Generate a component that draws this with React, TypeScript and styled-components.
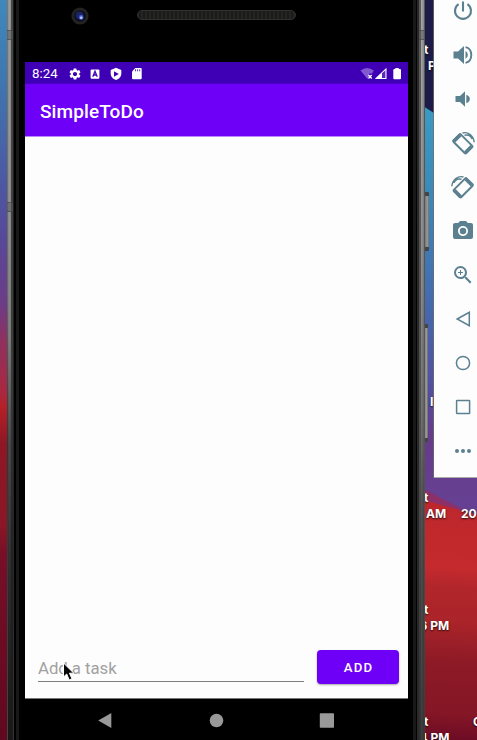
import React from 'react';
import styled, { createGlobalStyle } from 'styled-components';
import { MdCameraAlt, MdZoomIn, MdSettings } from 'react-icons/md';

const GlobalStyle = createGlobalStyle`
  * { box-sizing: border-box; }
  body { margin: 0; overflow: hidden; }
`;

const Desktop = styled.main`
  position: relative;
  width: 477px;
  height: 740px;
  overflow: hidden;
  font-family: Roboto, sans-serif;
`;

const WallpaperSvg = styled.svg`
  position: absolute;
  inset: 0;
`;

const FileLabel = styled.span<{ $x: number; $y: number }>`
  position: absolute;
  left: ${p => p.$x}px;
  top: ${p => p.$y}px;
  font: 700 12px/16px Inter, sans-serif;
  color: #fff;
  white-space: pre;
  text-shadow: 0 1px 2px rgba(0, 0, 0, 0.8);
`;

const Phone = styled.section`
  position: absolute;
  left: 7px;
  top: 0;
  width: 418px;
  height: 740px;
  display: grid;
  grid-template-columns: 18px 383px 17px;
`;

const Edge = styled.div`
  display: flex;
  background: #000;
`;

const Strip = styled.i<{ $w: number; $c: string }>`
  flex: 0 0 ${p => p.$w}px;
  background: ${p => p.$c};
`;

const SideKey = styled.i<{ $x: number; $y: number; $h: number }>`
  position: absolute;
  left: ${p => p.$x}px;
  top: ${p => p.$y}px;
  width: 4px;
  height: ${p => p.$h}px;
  border-radius: 0 1px 1px 0;
  background:
    linear-gradient(#444 0 4px, transparent 4px calc(100% - 4px), #444 calc(100% - 4px)),
    linear-gradient(90deg, #777, #999 60%, #686868);
`;

const Antenna = styled.i<{ $x: number; $y: number; $w: number }>`
  position: absolute;
  left: ${p => p.$x}px;
  top: ${p => p.$y}px;
  width: ${p => p.$w}px;
  height: 10px;
  background: rgba(85, 85, 85, 0.5);
  border: solid rgba(60, 60, 60, 0.5);
  border-width: 1px 0;
`;

const Body = styled.div`
  display: grid;
  grid-template-rows: 62px 22px 53px 562px 41px;
  background: #000;
`;

const Forehead = styled.div`
  position: relative;
`;

const Hardware = styled.svg`
  display: block;
`;

const StatusBar = styled.div`
  display: flex;
  align-items: center;
  background: linear-gradient(#3f00b5 0 20px, #4b00c9);
  color: #fff;
  padding: 1px 6px 0 7px;
`;

const Clock = styled.span`
  font-size: 13.3px;
  width: 35.5px;
`;

const Notices = styled.div`
  display: flex;
  align-items: center;
  gap: 6.7px;
  flex: 1;
  svg { display: block; }
`;

const AppBar = styled.header`
  display: flex;
  align-items: center;
  background: #6e00f8;
  border-bottom: 1px solid #b987f8;
  padding: 2px 15px 0;
`;

const Title = styled.h1`
  margin: 0;
  color: #fff;
  font-size: 19px;
  font-weight: 500;
  letter-spacing: 0.1px;
`;

const Content = styled.div`
  display: flex;
  align-items: flex-end;
  background: #fdfdfd;
  border-bottom: 1px solid #777;
  padding: 0 9px 14px 13px;
`;

const Field = styled.label`
  width: 266px;
  height: 30px;
  border-bottom: 1px solid #808080;
  margin: 0 13px 2px 0;
  display: flex;
`;

const Input = styled.input`
  width: 100%;
  border: 0;
  outline: 0;
  padding: 4px 0 0;
  background: transparent;
  font: 400 16.8px/25px Roboto, sans-serif;
  letter-spacing: -0.05px;
  &::placeholder { color: #a1a1a1; opacity: 1; }
`;

const AddButton = styled.button`
  width: 82px;
  height: 34px;
  border: 0;
  border-radius: 4px;
  background: #6e00f8;
  box-shadow: 0 1px 2px rgba(0, 0, 0, 0.35);
  color: #fff;
  font: 500 13.2px/34px Roboto, sans-serif;
  letter-spacing: 1.1px;
  padding: 1px 0 0 1px;
`;

const Nav = styled.nav`
  svg { display: block; }
`;

const Cursor = styled.svg`
  position: absolute;
  left: 61px;
  top: 662px;
`;

const Toolbar = styled.aside`
  position: absolute;
  left: 434px;
  top: 0;
  width: 58px;
  height: 478px;
  background: #fdfdfd;
  border-bottom: 1px solid #aaa;
  box-shadow: -1px 0 0 rgba(110, 110, 110, 0.75);
  color: #5b8090;
`;

const Tools = styled.div`
  display: grid;
  grid-auto-rows: 44px;
  justify-items: center;
  align-items: center;
  margin-top: -11px;
  svg { display: block; }
`;

const strips: [number, string][] = [
  [1, 'linear-gradient(#777, #666 40%, #333 60%, #444)'],
  [3, 'linear-gradient(90deg, rgba(0,0,0,.12), transparent 60%, rgba(0,0,0,.18)), linear-gradient(#a0a0a0, #979797 28%, #858585 45%, #4d4d4d 60%, #303030 78%, #191919)'],
  [2, 'linear-gradient(#484848, #3a3a3a 50%, #222 75%, #1b1b1b)'],
  [1, 'linear-gradient(#1a1a1a, #222 60%, #333)'],
  [2, '#000'],
  [3, '#181818'],
];

const rightStrips: [number, string][] = [
  [5, '#000'],
  [3, '#181818'],
  [1, '#030303'],
  [2, '#292929'],
  [2, 'linear-gradient(#5b5b5b, #505050 60%, #303030)'],
  [3, 'linear-gradient(90deg, transparent, rgba(0,0,0,.2)), linear-gradient(#aaa, #959595 35%, #777 55%, #525252 70%, #404040)'],
  [1, 'linear-gradient(#555, #555 60%, #3a3a3a)'],
];

const labels: [number, number, string][] = [
  [424, 42, 't'], [428, 58, 'PM'], [430, 394, 'I'],
  [424, 490, 't'], [426, 506, 'AM'], [461, 506, '20'],
  [424, 602, 't'], [419.5, 618, '6 PM'],
  [424, 714, 't'], [473, 714, 'C'], [419.5, 730, '4 PM'],
];

function Wallpaper() {
  return (
    <WallpaperSvg width="477" height="740">
      <defs>
        <linearGradient id="left" x2="0" y2="1">
          <stop offset="0" stopColor="#3f88ba" /><stop offset=".1" stopColor="#3f78b0" />
          <stop offset=".23" stopColor="#4a5ca4" /><stop offset=".32" stopColor="#574999" />
          <stop offset=".41" stopColor="#6c3c87" /><stop offset=".46" stopColor="#8e315f" />
          <stop offset=".53" stopColor="#aa2840" /><stop offset=".55" stopColor="#b52027" />
          <stop offset=".6" stopColor="#8d1725" /><stop offset=".71" stopColor="#8b1625" />
          <stop offset=".75" stopColor="#760f27" /><stop offset="1" stopColor="#60081f" />
        </linearGradient>
        <linearGradient id="blue" gradientUnits="userSpaceOnUse" x1="0" y1="110" x2="0" y2="500">
          <stop offset="0" stopColor="#3b9ac1" /><stop offset=".25" stopColor="#3c86b6" />
          <stop offset=".5" stopColor="#456aae" /><stop offset=".7" stopColor="#5250a1" />
          <stop offset=".84" stopColor="#663b88" /><stop offset="1" stopColor="#664092" />
        </linearGradient>
        <linearGradient id="red" gradientUnits="userSpaceOnUse" x1="435" y1="500" x2="420" y2="740">
          <stop offset="0" stopColor="#bd272b" /><stop offset=".28" stopColor="#c42a2e" />
          <stop offset=".36" stopColor="#b1262b" /><stop offset=".5" stopColor="#aa2429" />
          <stop offset=".67" stopColor="#8d1a26" /><stop offset=".88" stopColor="#851625" />
          <stop offset="1" stopColor="#6b0b26" />
        </linearGradient>
      </defs>
      <rect width="12" height="740" fill="url(#left)" />
      <rect x="420" width="57" height="740" fill="url(#blue)" />
      <path d="M420 0H477V141L420 104Z" fill="#1c1b49" />
      <path d="M420 487L462 509L477 515H420Z" fill="#8b3069" />
      <path d="M420 499L477 515V740H420Z" fill="url(#red)" />
    </WallpaperSvg>
  );
}

function RotateIcon({ flip }: { flip?: boolean }) {
  return (
    <svg width="24" height="24" viewBox="0 0 24 24" fill="none" stroke="currentColor">
      <g transform={flip ? 'matrix(-1 0 0 1 24 0)' : undefined}>
        <g transform="rotate(45 11.8 12.8)">
          <rect x="2.8" y="7.6" width="18" height="10.4" rx="1.2" strokeWidth="2" />
          <path d="M3.8 8.3v9M19.8 8.3v9" strokeWidth="3.4" />
        </g>
        <path d="M11.5 2C17 .3 22.6 4.8 23.2 11.3M13.5 4.3C17.5 3.3 20 5 21 8" strokeWidth="1.4" />
      </g>
    </svg>
  );
}

export default function App() {
  return (
    <>
      <GlobalStyle />
      <Desktop>
        <Wallpaper />
        {labels.map(([x, y, t], i) => <FileLabel key={i} $x={x} $y={y}>{t}</FileLabel>)}
        <SideKey $x={425} $y={192} $h={59} />
        <SideKey $x={424} $y={324} $h={118} />
        <Phone>
          <Edge>{strips.map(([w, c], i) => <Strip key={i} $w={w} $c={c} />)}</Edge>
          <Body>
            <Forehead>
              <Hardware width="383" height="62">
                <defs>
                  <pattern id="mesh" width="4" height="4" patternUnits="userSpaceOnUse">
                    <rect width="4" height="4" fill="#1b1b19" />
                    <path d="M1 0v4" stroke="#2d2d2a" />
                  </pattern>
                </defs>
                <circle cx="55" cy="16" r="8.6" fill="#232322" />
                <circle cx="55" cy="16" r="5.8" fill="#0e0e20" />
                <circle cx="54.5" cy="15.3" r="3.9" fill="#1b2566" />
                <circle cx="56.2" cy="17.4" r="2.3" fill="#4565d8" />
                <circle cx="56.2" cy="17.7" r="1.2" fill="#c5cfff" />
                <rect x="112.5" y="10.5" width="158" height="9" rx="4.5" fill="url(#mesh)" stroke="#30302f" />
              </Hardware>
            </Forehead>
            <StatusBar>
              <Clock>8:24</Clock>
              <Notices>
                <MdSettings size={14} />
                <svg width="14" height="14" viewBox="0 0 14 14">
                  <rect x="2.6" y="2.5" width="8.8" height="9.2" rx="1" fill="#fff" />
                  <path d="M4.8 9.8L7 4.3L9.2 9.8M5.7 8H8.4" fill="none" stroke="#4100b8" strokeWidth="1.3" />
                </svg>
                <svg width="14" height="14" viewBox="0 0 14 14">
                  <path d="M7 .8L12.3 3V6.5C12.3 9.6 10 12.2 7 13C4 12.2 1.7 9.6 1.7 6.5V3Z" fill="#fff" />
                  <path d="M5 4.3L9.8 7L5 9.7Z" fill="#4100b8" />
                </svg>
                <svg width="14" height="14" viewBox="0 0 14 14">
                  <path d="M5.3 1H10.8Q11.7 1 11.7 2V11.2Q11.7 12.2 10.7 12.2H3Q2 12.2 2 11.2V4.4Z" fill="#fff" />
                  <path d="M5.5 2.3v2M7.6 2.3v2M9.7 2.3v2" stroke="#5f30c3" />
                </svg>
              </Notices>
              <svg width="42" height="16" viewBox="0 0 42 16">
                <path d="M.5 4.6Q7 -.6 13.8 4.6L12 7.5H9V11L7.3 12.8Z" fill="#8259d0" />
                <path d="M8.5 9L11.7 12.5M11.7 9L8.5 12.5" stroke="#fff" strokeWidth="1.2" />
                <path d="M15.2 13V12.6L26.5 1.8V13Z" fill="#fff" />
                <path d="M22 7.3L25.4 4.2V12H22Z" fill="#5928bd" />
                <path d="M35.3 2H38.7V3H40Q41 3 41 4V12.2Q41 13.2 40 13.2H34.3Q33.3 13.2 33.3 12.2V4Q33.3 3 34.3 3H35.3Z" fill="#fff" />
              </svg>
            </StatusBar>
            <AppBar><Title>SimpleToDo</Title></AppBar>
            <Content>
              <Field><Input placeholder="Add a task" aria-label="Add a task" /></Field>
              <AddButton>ADD</AddButton>
            </Content>
            <Nav>
              <svg width="383" height="41" fill="#999">
                <path d="M73.2 21.5L86.3 14V29Z" />
                <circle cx="191.5" cy="21.5" r="6.8" />
                <rect x="294.8" y="14.3" width="14.2" height="14.5" rx=".8" />
              </svg>
            </Nav>
          </Body>
          <Edge>{rightStrips.map(([w, c], i) => <Strip key={i} $w={w} $c={c} />)}</Edge>
        </Phone>
        <Antenna $x={7} $y={30} $w={6} />
        <Antenna $x={7} $y={202} $w={6} />
        <Antenna $x={419} $y={30} $w={5} />
        <Cursor width="15" height="22" viewBox="0 0 15 22">
          <path d="M2.5 1V15L5.7 12L8.2 18L11 16.7L8.4 11.2H12.8Z" fill="#080808" stroke="#fff" strokeWidth="1" />
        </Cursor>
        <Toolbar>
          <Tools>
            <svg width="24" height="24" fill="none" stroke="currentColor" strokeWidth="2.1">
              <path d="M12 2.5V12.5M7.6 5.2A8 8 0 1 0 16.4 5.2" />
            </svg>
            <svg width="24" height="24" fill="currentColor">
              <path d="M2.5 8.5H7L13 3V21L7 15.5H2.5Z" />
              <path d="M14.5 8Q16.8 9.2 16.8 12T14.5 16Z" />
              <path d="M14.5 4.1C18.5 5 20.3 8.3 20.3 12S18.5 19 14.5 19.9" fill="none" stroke="currentColor" strokeWidth="1.9" />
            </svg>
            <svg width="24" height="24" fill="currentColor">
              <path d="M4.5 9H9L14 4.3V19.7L9 15H4.5Z" />
              <path d="M15.3 7.8Q18.8 9 18.8 12T15.3 16.2Z" />
            </svg>
            <RotateIcon />
            <RotateIcon flip />
            <MdCameraAlt size={24} />
            <MdZoomIn size={24} />
            <svg width="24" height="24" fill="none" stroke="currentColor" strokeWidth="1.5"><path d="M6.2 12L18.3 5.3V18.7Z" /></svg>
            <svg width="24" height="24" fill="none" stroke="currentColor" strokeWidth="1.5"><circle cx="12" cy="12" r="6.6" /></svg>
            <svg width="24" height="24" fill="none" stroke="currentColor" strokeWidth="1.5"><rect x="5.6" y="5.6" width="13" height="13" rx=".5" /></svg>
            <svg width="24" height="24" fill="currentColor"><circle cx="6" cy="12" r="2" /><circle cx="12" cy="12" r="2" /><circle cx="18" cy="12" r="2" /></svg>
          </Tools>
        </Toolbar>
      </Desktop>
    </>
  );
}
